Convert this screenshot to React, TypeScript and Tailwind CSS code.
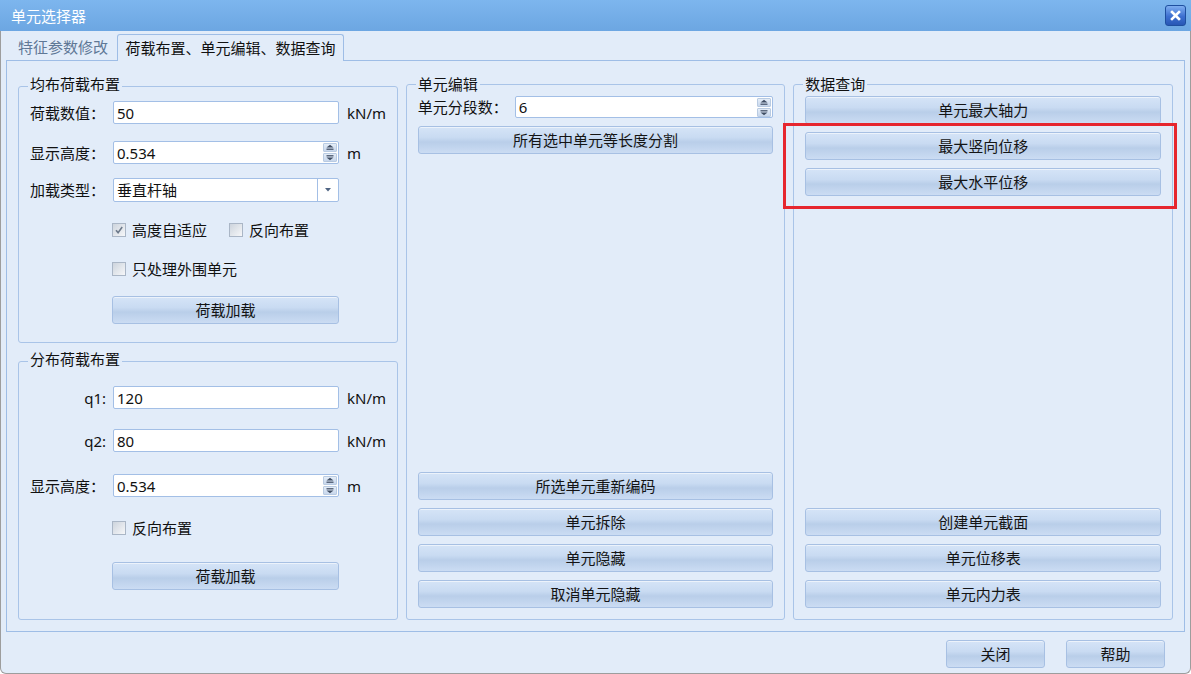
import React from "react";

type Kids = { children?: React.ReactNode; className?: string };

function Btn({ children, className = "" }: Kids) {
  return (
    <div
      className={`flex h-[28px] items-center justify-center rounded-[3px] border border-[#a7c0e3] bg-[linear-gradient(180deg,#d5e4f7_0%,#c9dbf2_40%,#b9cee9_58%,#cbdcf3_100%)] shadow-[inset_0_1px_0_rgba(255,255,255,0.55)] text-[15px] leading-[20px] text-[#141414] ${className}`}
    >
      {children}
    </div>
  );
}

function SpinBtn({ up }: { up?: boolean }) {
  return (
    <div className="flex flex-1 items-center justify-center rounded-[1px] border border-[#b9cbe2] bg-[linear-gradient(180deg,#e4edf8,#c8d7ec)]">
      <svg width="10" height="7" viewBox="0 0 10 7">
        {up ? (
          <>
            <path d="M1.5 3.6 L5 0.8 L8.5 3.6 Z" fill="#3f4d63" />
            <rect x="1.5" y="4.6" width="7" height="1.2" fill="#3f4d63" />
          </>
        ) : (
          <>
            <rect x="1.5" y="1.2" width="7" height="1.2" fill="#3f4d63" />
            <path d="M1.5 3.4 L5 6.2 L8.5 3.4 Z" fill="#3f4d63" />
          </>
        )}
      </svg>
    </div>
  );
}

function TextBox({
  value,
  spin,
  combo,
  className = "",
}: {
  value: string;
  spin?: boolean;
  combo?: boolean;
  className?: string;
}) {
  return (
    <div
      className={`flex items-stretch rounded-[2px] border border-[#a3bfe6] bg-white text-[15px] leading-[20px] text-[#111] ${className}`}
    >
      <span className="flex flex-1 items-center pl-[3px]">{value}</span>
      {spin && (
        <div className="my-[1px] mr-[1px] flex w-[14px] flex-col gap-[1px]">
          <SpinBtn up />
          <SpinBtn />
        </div>
      )}
      {combo && (
        <div className="flex w-[21px] items-center justify-center border-l border-[#a3bfe6]">
          <svg width="6" height="4" viewBox="0 0 6 4">
            <path d="M0 0 L6 0 L3 3.5 Z" fill="#4f6483" />
          </svg>
        </div>
      )}
    </div>
  );
}

function Check({ checked, label, className = "" }: { checked?: boolean; label: string; className?: string }) {
  return (
    <div className={`flex h-[20px] items-center ${className}`}>
      <div className="flex h-[14px] w-[14px] items-center justify-center border border-[#aab6c6] bg-[linear-gradient(135deg,#cdd4dd,#f6f7f9)]">
        {checked && (
          <svg width="10" height="10" viewBox="0 0 10 10">
            <path d="M2 5.2 L4.1 7.6 L8.2 2" stroke="#6d7a8b" strokeWidth="1.6" fill="none" />
          </svg>
        )}
      </div>
      <span className="ml-[6px] text-[15px] leading-[20px] text-[#111]">{label}</span>
    </div>
  );
}

function Group({
  title,
  children,
  className = "",
  titleTop = "-top-[11px]",
}: Kids & { title: string; titleTop?: string }) {
  return (
    <div className={`relative flex flex-col rounded-[3px] border border-[#a9c4e8] ${className}`}>
      <span
        className={`absolute left-[9px] ${titleTop} bg-[#e2ecf9] px-[2px] text-[15px] leading-[20px] text-[#111]`}
      >
        {title}
      </span>
      {children}
    </div>
  );
}

function Row({ label, children, className = "", right }: Kids & { label: string; right?: boolean }) {
  return (
    <div className={`flex items-center ${className}`}>
      <span
        className={`w-[83px] shrink-0 text-[15px] leading-[20px] text-[#111] ${right ? "pr-[7px] text-right" : ""}`}
      >
        {label}
      </span>
      {children}
    </div>
  );
}

export default function App() {
  return (
    <div className="relative h-[674px] w-[1191px] overflow-hidden bg-white font-['Noto_Sans','Noto_Sans_CJK_SC',sans-serif]">
      <div className="flex h-full flex-col">
        {/* title bar */}
        <div className="flex h-[31px] shrink-0 items-center justify-between bg-[linear-gradient(180deg,#7db6ee,#6ca6e2)] pl-[11px] pr-[5px]">
          <span className="text-[15px] leading-[20px] text-white">单元选择器</span>
          <div className="flex h-[21px] w-[21px] items-center justify-center rounded-[3px] border border-[#1f4f9f] bg-[linear-gradient(180deg,#7eaef0,#3d6fd0_55%,#2857b5)]">
            <svg width="11" height="11" viewBox="0 0 11 11">
              <path d="M2 2 L9 9 M9 2 L2 9" stroke="white" strokeWidth="2.6" strokeLinecap="square" />
            </svg>
          </div>
        </div>

        {/* body */}
        <div className="flex flex-1 flex-col rounded-b-[6px] border-x border-b border-[#9d9d9d] bg-[#e2ecf9]">
          {/* tabs */}
          <div className="flex h-[29px] shrink-0 items-end pl-[5px]">
            <div className="flex h-[27px] w-[111px] items-center pl-[12px] text-[15px] leading-[20px] text-[#5f7896]">
              特征参数修改
            </div>
            <div className="relative z-10 -mb-[1px] flex h-[27px] w-[227px] items-center justify-center rounded-t-[3px] border-x border-t border-[#9ebde6] bg-[#e2ecf9] text-[15px] leading-[20px] text-[#111]">
              荷载布置、单元编辑、数据查询
            </div>
          </div>

          {/* panel */}
          <div className="mx-[5px] grid h-[572px] shrink-0 grid-cols-3 gap-x-[8px] border border-[#9ebde6] px-[11px] pb-[11px] pt-[23px]">
            {/* left column */}
            <div className="flex flex-col pt-[2px]">
              <Group title="均布荷载布置" titleTop="-top-[13px]" className="pb-[18px] pl-[11px]">
                <Row label="荷载数值：" className="mt-[14px]">
                  <TextBox value="50" className="h-[23px] w-[226px]" />
                  <span className="ml-[8px] text-[15px] leading-[20px] text-[#111]">kN/m</span>
                </Row>
                <Row label="显示高度：" className="mt-[17px]">
                  <TextBox value="0.534" spin className="h-[23px] w-[226px]" />
                  <span className="ml-[8px] text-[15px] leading-[20px] text-[#111]">m</span>
                </Row>
                <Row label="加载类型：" className="mt-[14px]">
                  <TextBox value="垂直杆轴" combo className="h-[24px] w-[226px]" />
                </Row>
                <div className="mt-[18px] flex pl-[82px]">
                  <Check checked label="高度自适应" />
                  <Check label="反向布置" className="ml-[22px]" />
                </div>
                <div className="mt-[19px] flex pl-[82px]">
                  <Check label="只处理外围单元" />
                </div>
                <Btn className="ml-[82px] mt-[17px] w-[227px]">荷载加载</Btn>
              </Group>

              <Group title="分布荷载布置" titleTop="-top-[13px]" className="mt-[18px] flex-1 pl-[11px]">
                <Row label="q1:" right className="mt-[24px]">
                  <TextBox value="120" className="h-[23px] w-[226px]" />
                  <span className="ml-[8px] text-[15px] leading-[20px] text-[#111]">kN/m</span>
                </Row>
                <Row label="q2:" right className="mt-[20px]">
                  <TextBox value="80" className="h-[23px] w-[226px]" />
                  <span className="ml-[8px] text-[15px] leading-[20px] text-[#111]">kN/m</span>
                </Row>
                <Row label="显示高度：" className="mt-[22px]">
                  <TextBox value="0.534" spin className="h-[23px] w-[226px]" />
                  <span className="ml-[8px] text-[15px] leading-[20px] text-[#111]">m</span>
                </Row>
                <div className="mt-[21px] flex pl-[82px]">
                  <Check label="反向布置" />
                </div>
                <Btn className="ml-[82px] mt-[24px] w-[227px]">荷载加载</Btn>
              </Group>
            </div>

            {/* middle column */}
            <Group title="单元编辑" className="px-[11px] pb-[11px]">
              <div className="mt-[11px] flex items-center">
                <span className="w-[97px] shrink-0 text-[15px] leading-[20px] text-[#111]">单元分段数：</span>
                <TextBox value="6" spin className="h-[22px] flex-1" />
              </div>
              <Btn className="mt-[8px]">所有选中单元等长度分割</Btn>
              <div className="flex-1" />
              <div className="flex flex-col gap-[8px]">
                <Btn>所选单元重新编码</Btn>
                <Btn>单元拆除</Btn>
                <Btn>单元隐藏</Btn>
                <Btn>取消单元隐藏</Btn>
              </div>
            </Group>

            {/* right column */}
            <Group title="数据查询" className="px-[11px] pb-[11px]">
              <div className="mt-[11px] flex flex-col gap-[8px]">
                <Btn>单元最大轴力</Btn>
                <Btn>最大竖向位移</Btn>
                <Btn>最大水平位移</Btn>
              </div>
              <div className="flex-1" />
              <div className="flex flex-col gap-[8px]">
                <Btn>创建单元截面</Btn>
                <Btn>单元位移表</Btn>
                <Btn>单元内力表</Btn>
              </div>
            </Group>
          </div>

          {/* footer */}
          <div className="flex flex-1 justify-end gap-[21px] pr-[25px] pt-[8px]">
            <Btn className="w-[99px]">关闭</Btn>
            <Btn className="w-[99px]">帮助</Btn>
          </div>
        </div>
      </div>

      {/* red annotation frame */}
      <div className="pointer-events-none absolute left-[783px] top-[123px] h-[86px] w-[394px] border-[3px] border-[#e6262e]" />
    </div>
  );
}
